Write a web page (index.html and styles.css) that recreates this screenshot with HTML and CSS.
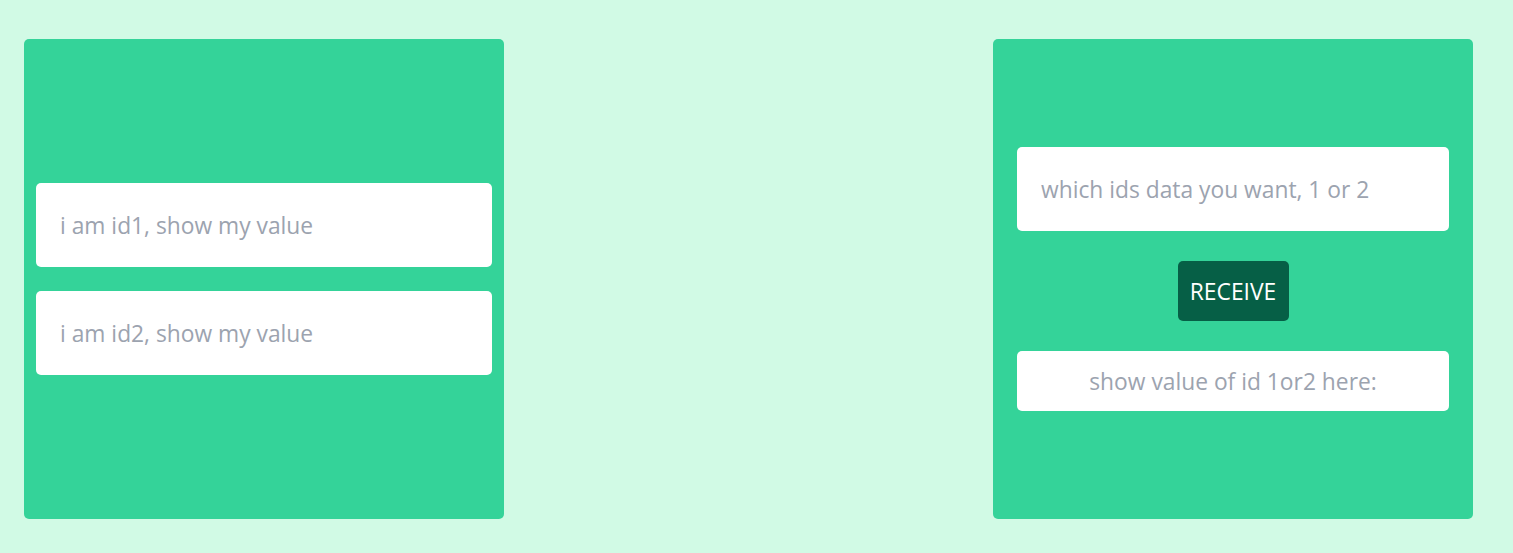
FILE: index.html
```html
<!DOCTYPE html>
<html>
<head>
<meta charset="utf-8">
<link rel="stylesheet" href="styles.css">
</head>
<body>
<main class="page">
  <section class="card card-left">
    <input class="field" type="text" placeholder="i am id1, show my value">
    <input class="field" type="text" placeholder="i am id2, show my value">
  </section>
  <section class="card card-right">
    <input class="field" type="text" placeholder="which ids data you want, 1 or 2">
    <button class="btn" type="button">RECEIVE</button>
    <input class="field field-small" type="text" placeholder="show value of id 1or2 here:">
  </section>
</main>
</body>
</html>
```
FILE: styles.css
```css
* { box-sizing: border-box; }
html, body { margin: 0; height: 100%; }
body {
  background: #d1fae5;
  font-family: "Open Sans", "Noto Sans", sans-serif;
}
.page {
  height: 553px;
  padding: 39px 40px 34px 24px;
  display: flex;
  justify-content: space-between;
}
.card {
  width: 480px;
  height: 480px;
  background: #34d399;
  border-radius: 5px;
  display: flex;
  flex-direction: column;
  justify-content: center;
}
.card-left { padding: 0 12px; gap: 24px; }
.card-right { padding: 0 24px; gap: 30px; align-items: center; }
.field {
  width: 100%;
  height: 84px;
  border: none;
  border-radius: 5px;
  background: #fff;
  padding: 0 24px;
  font-family: inherit;
  font-size: 22.8px;
  color: #374151;
  outline: none;
}
.field::placeholder { color: #9ca3af; }
.field-small { height: 60px; text-align: center; }
.btn {
  height: 60px;
  width: 111px;
  padding: 0;
  border: none;
  border-radius: 5px;
  background: #065f46;
  color: #fff;
  font-family: inherit;
  font-size: 22.8px;
}
```
